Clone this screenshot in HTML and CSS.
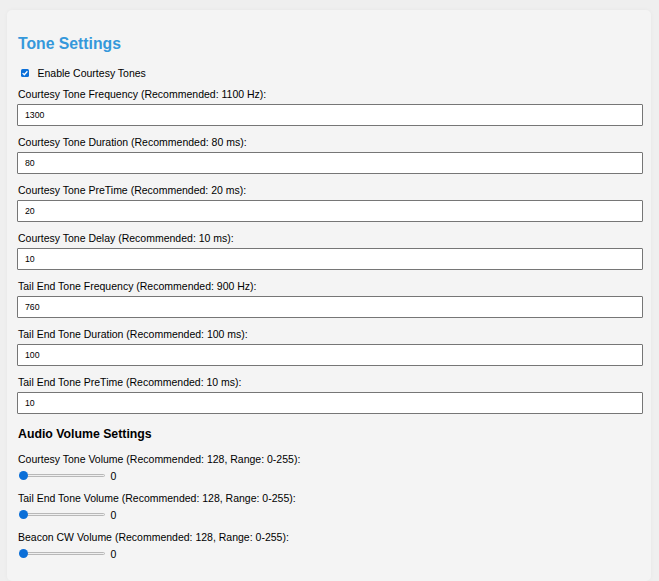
FILE: index.html
```html
<!DOCTYPE html>
<html lang="en">
<head>
<meta charset="utf-8">
<title>Tone Settings</title>
<link rel="stylesheet" href="styles.css">
</head>
<body>
<div class="card">
  <h2 class="title">Tone Settings</h2>
  <div class="check-row">
    <span class="checkbox"><svg viewBox="0 0 8 8" width="8" height="8"><path d="M1.6 4.1 L3.3 5.7 L6.4 2.3" fill="none" stroke="#fff" stroke-width="1.3"/></svg></span>
    <span>Enable Courtesy Tones</span>
  </div>
  <div class="field"><label class="lbl">Courtesy Tone Frequency (Recommended: 1100 Hz):</label><input class="txt" type="text" value="1300"></div>
  <div class="field"><label class="lbl">Courtesy Tone Duration (Recommended: 80 ms):</label><input class="txt" type="text" value="80"></div>
  <div class="field"><label class="lbl">Courtesy Tone PreTime (Recommended: 20 ms):</label><input class="txt" type="text" value="20"></div>
  <div class="field"><label class="lbl">Courtesy Tone Delay (Recommended: 10 ms):</label><input class="txt" type="text" value="10"></div>
  <div class="field"><label class="lbl">Tail End Tone Frequency (Recommended: 900 Hz):</label><input class="txt" type="text" value="760"></div>
  <div class="field"><label class="lbl">Tail End Tone Duration (Recommended: 100 ms):</label><input class="txt" type="text" value="100"></div>
  <div class="field"><label class="lbl">Tail End Tone PreTime (Recommended: 10 ms):</label><input class="txt" type="text" value="10"></div>
  <h3 class="subtitle">Audio Volume Settings</h3>
  <div class="field"><label class="lbl">Courtesy Tone Volume (Recommended: 128, Range: 0-255):</label>
    <div class="slider-row"><span class="slider"><span class="track"></span><span class="thumb"></span></span><span class="val">0</span></div></div>
  <div class="field"><label class="lbl">Tail End Tone Volume (Recommended: 128, Range: 0-255):</label>
    <div class="slider-row"><span class="slider"><span class="track"></span><span class="thumb"></span></span><span class="val">0</span></div></div>
  <div class="field"><label class="lbl">Beacon CW Volume (Recommended: 128, Range: 0-255):</label>
    <div class="slider-row"><span class="slider"><span class="track"></span><span class="thumb"></span></span><span class="val">0</span></div></div>
</div>
</body>
</html>
```
FILE: styles.css
```css
html, body {
  margin: 0;
  padding: 0;
  background: #efefef;
  font-family: "Liberation Sans", Arial, sans-serif;
  font-size: 10.5px;
  color: #000;
}
body {
  padding: 10px 8px 0 7px;
}
.card {
  box-sizing: border-box;
  min-height: 571px;
  background: #f4f4f4;
  border-radius: 5px;
  box-shadow: 0 0 4px rgba(0, 0, 0, 0.04);
  padding: 11.5px 8px 6px 10px;
}
.title {
  margin: 13px 0 14px 1px;
  font-size: 15.75px;
  font-weight: bold;
  line-height: 18px;
  color: #3498db;
}
.check-row {
  display: flex;
  align-items: center;
  height: 12px;
  line-height: 12px;
  margin-bottom: 9.5px;
}
.checkbox {
  width: 8px;
  height: 8px;
  margin: 0 9px 0 3.5px;
  background: #0b6fd8;
  border-radius: 1.5px;
  display: flex;
}
.field {
  margin-bottom: 10.5px;
}
.field:last-child {
  margin-bottom: 0;
}
.lbl {
  display: block;
  line-height: 12px;
  margin-bottom: 3.5px;
  margin-left: 1px;
}
.txt {
  display: block;
  box-sizing: border-box;
  width: 626px;
  height: 22px;
  margin: 0;
  padding: 0 7px;
  border: 1px solid #767676;
  border-radius: 1px;
  background: #fff;
  font-family: "Liberation Sans", Arial, sans-serif;
  font-size: 8.75px;
  color: #000;
}
.subtitle {
  margin: 13.3px 0 12.3px 1px;
  font-size: 12.3px;
  line-height: 14px;
  font-weight: bold;
}
.slider-row {
  display: flex;
  align-items: center;
  height: 13px;
}
.slider {
  position: relative;
  width: 86px;
  height: 10px;
  margin-left: 1.5px;
  margin-right: 6px;
}
.track {
  position: absolute;
  left: 0;
  right: 0;
  top: 3.5px;
  height: 3px;
  background: #efefef;
  border: 0.6px solid #b8b8b8;
  border-radius: 2px;
  box-sizing: border-box;
}
.thumb {
  position: absolute;
  left: 0.5px;
  top: 0.5px;
  width: 9px;
  height: 9px;
  border-radius: 50%;
  background: #0b6fd8;
}
.val {
  position: relative;
  top: 1px;
  line-height: 12px;
}
```
